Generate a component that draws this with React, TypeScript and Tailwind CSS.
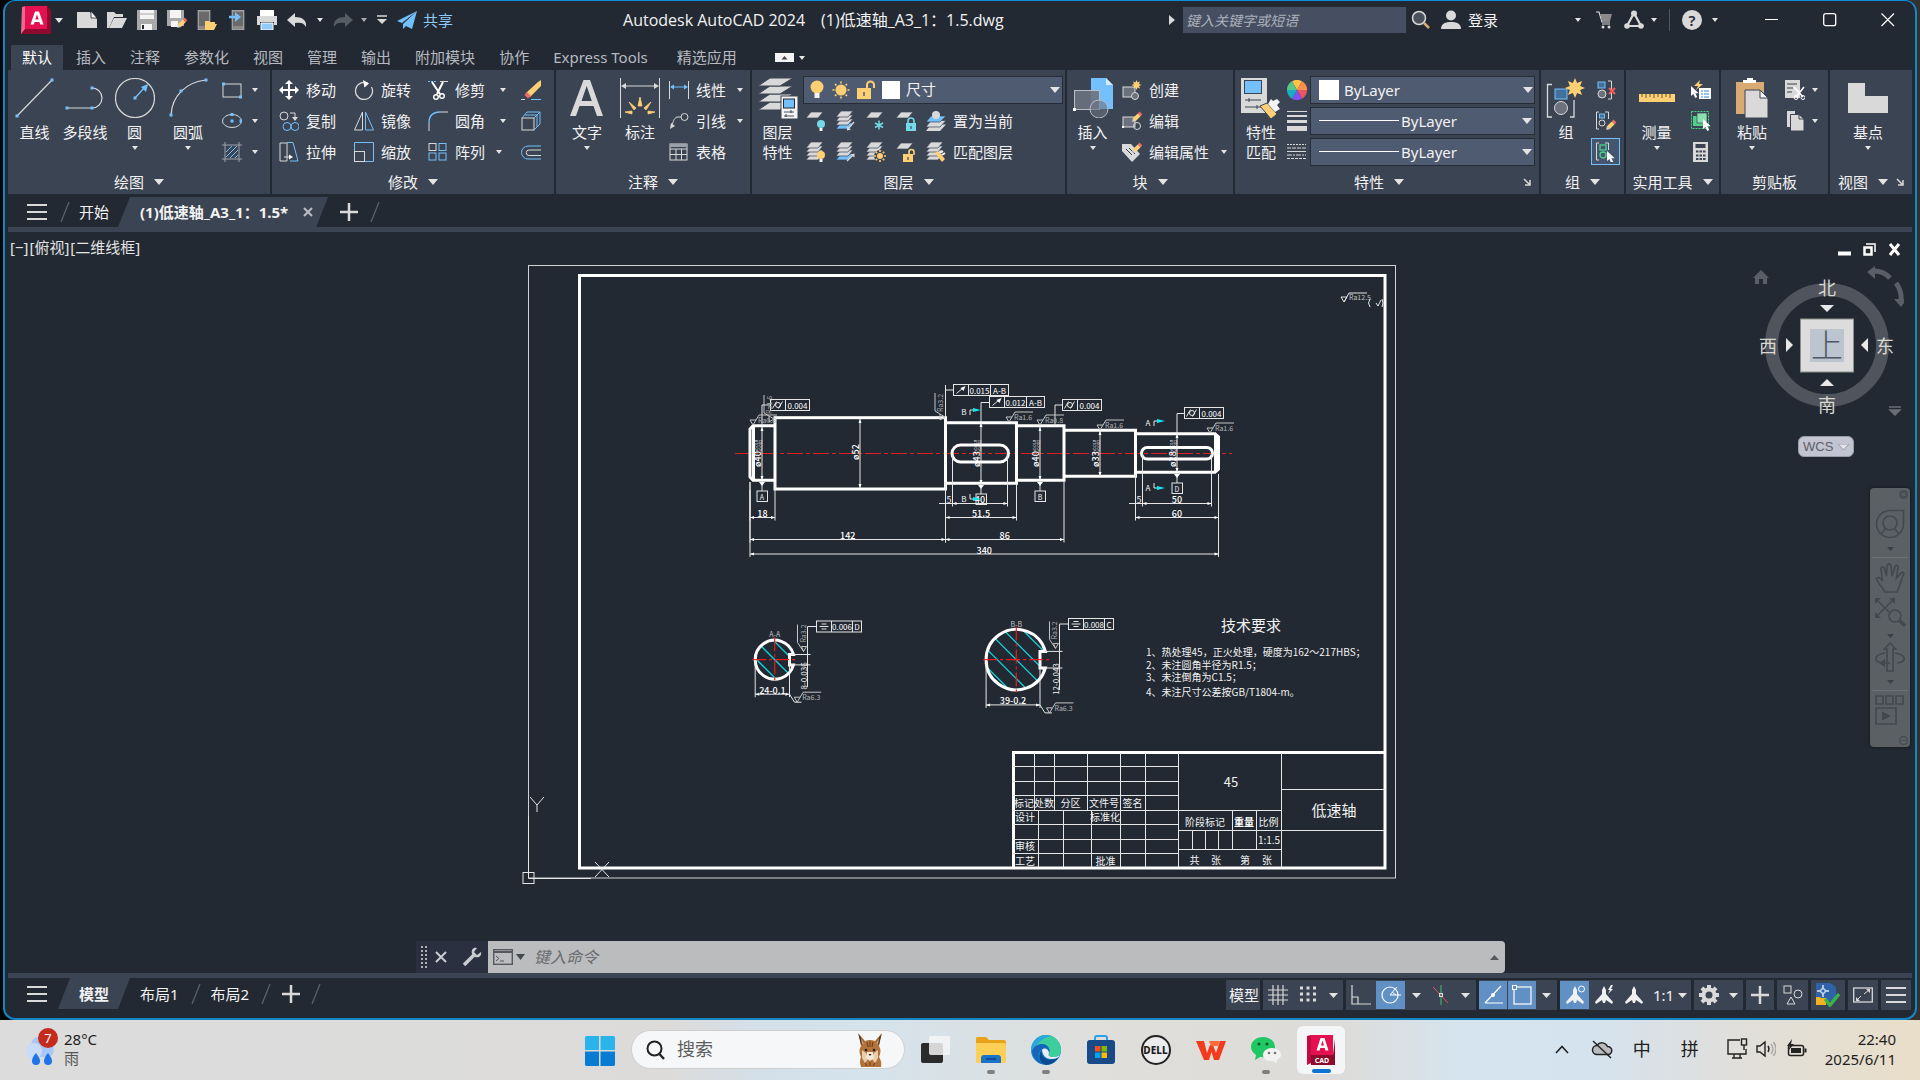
import type { ReactNode } from "react";

const G = "#d9d9d9";
const B = "#74c0fc";
const Y = "#ffd073";
const T = "#74d9e6";

function Svg({ w = 20, h = 20, vb, children, className = "" }: { w?: number; h?: number; vb?: string; children: ReactNode; className?: string }) {
  return (
    <svg width={w} height={h} viewBox={vb ?? `0 0 ${w} ${h}`} fill="none" stroke="none" aria-hidden="true" className={`shrink-0 ${className}`}>
      {children}
    </svg>
  );
}

function Caret({ size = 6, className = "" }: { size?: number; className?: string }) {
  const h = Math.round(size * 0.6);
  return (
    <Svg w={size} h={h} className={className}>
      <path d={`M0 0H${size}L${size / 2} ${h}Z`} fill="#e4e4e4" />
    </Svg>
  );
}

const sq = (x: number, y: number, s = 3) => <rect key={`${x}-${y}`} x={x - s / 2} y={y - s / 2} width={s} height={s} fill={B} />;

/* ---------- ribbon building blocks ---------- */

function Panel({ title, width, children, menu = true, launcher = false }: { title: string; width: string; children: ReactNode; menu?: boolean; launcher?: boolean }) {
  return (
    <section className={`${width} flex flex-col border-r-2 border-[#222933] last:border-r-0`}>
      <div className="flex h-[99px] items-start pt-1">{children}</div>
      <div className="flex h-[25px] items-center">
        <button className="flex flex-1 items-center justify-center gap-[10px] text-[15px] leading-5">
          {title}
          {menu && <Caret size={10} />}
        </button>
        {launcher && (
          <button className="w-[16px]" aria-label={`${title}设置`}>
            <Svg w={8} h={8}>
              <path d="M1 1L6 6M7 2V7H2" stroke={G} strokeWidth="1.5" />
            </Svg>
          </button>
        )}
      </div>
    </section>
  );
}

function Big({ label, width, icon, caret = false }: { label: string[]; width: string; icon: ReactNode; caret?: boolean }) {
  return (
    <button className={`${width} flex flex-none flex-col items-center pt-1 text-[15px] leading-5 whitespace-nowrap`}>
      <span className="flex h-[42px] items-start justify-center pb-[2px]">{icon}</span>
      {label.map((l) => (
        <span key={l} className="mt-[2px] h-[18px] leading-5">{l}</span>
      ))}
      {caret && <Caret className="mt-[6px]" />}
    </button>
  );
}

function Col({ children, className = "" }: { children: ReactNode; className?: string }) {
  return <div className={`flex flex-none flex-col ${className}`}>{children}</div>;
}

function Small({ icon, label, caret = false, gap = "ml-3" }: { icon: ReactNode; label?: string; caret?: boolean; gap?: string }) {
  return (
    <button className="flex h-[31px] items-center text-[15px] leading-5 whitespace-nowrap" aria-label={label ?? "工具"}>
      {icon}
      {label && <span className="ml-[7px]">{label}</span>}
      {caret && <Caret className={gap} />}
    </button>
  );
}

/* ---------- layer glyphs ---------- */

const sheet = (y: number, c = G) => <path key={y} d={`M5 ${y}H17L12 ${y + 6}H0Z`} fill={c} stroke="#3b4453" strokeWidth="0.7" />;
const bulb = (x: number, y: number, c: string) => (
  <>
    <circle cx={x} cy={y} r="4" fill={c} />
    <rect x={x - 1.5} y={y + 4} width="3" height="3" fill="#f4f4f4" />
  </>
);
const sun = (x: number, y: number, r: number) => (
  <>
    <circle cx={x} cy={y} r={r} fill={Y} />
    {[0, 45, 90, 135, 180, 225, 270, 315].map((a) => (
      <path key={a} d={`M${x} ${y - r - 1}V${y - r - 3}`} stroke={Y} strokeWidth="1.6" transform={`rotate(${a} ${x} ${y})`} />
    ))}
  </>
);
const lock = (x: number, y: number, c: string, open: boolean) => (
  <>
    <rect x={x} y={y} width="10" height="8" fill={c} />
    <path d={open ? `M${x + 6} ${y}V${y - 2}a2.5 2.5 0 0 1 5 0V${y + 1}` : `M${x + 2} ${y}V${y - 2}a3 3 0 0 1 6 0V${y}`} stroke={c} strokeWidth="1.6" />
    <path d={`M${x + 5} ${y + 3}v3`} stroke="#3b4453" strokeWidth="1.2" />
  </>
);
const burst = (x: number, y: number, R: number) => {
  const pts = Array.from({ length: 16 }, (_, i) => {
    const r = i % 2 ? R * 0.55 : R;
    const a = (i * Math.PI) / 8;
    return `${(x + r * Math.sin(a)).toFixed(1)},${(y - r * Math.cos(a)).toFixed(1)}`;
  }).join(" ");
  return <polygon points={pts} fill={Y} />;
};
const pencil = (x: number, y: number) => (
  <g transform={`translate(${x} ${y}) rotate(45)`}>
    <rect x="-2" y="0" width="4" height="2.6" fill="#f16a6a" />
    <rect x="-2" y="2.6" width="4" height="7" fill={Y} />
    <path d="M-2 9.600H2L0 12.500Z" fill={G} />
  </g>
);
const cursor = (x: number, y: number) => <path d={`M${x} ${y}v10l2.400-2 1.800 4 2-1-1.800-3.800h3.300Z`} fill="#fff" />;

const LAYER_ROW_2 = [
  <Svg key="a">{sheet(1)}{bulb(15, 13, T)}</Svg>,
  <Svg key="b">{sheet(12, B)}{sheet(8)}{sheet(4)}{sheet(0)}<path d="M18 11L12 18" stroke={G} strokeWidth="1.4" /><path d="M11 19.500v-4l4 3Z" fill={G} /></Svg>,
  <Svg key="c">{sheet(1)}<path d="M13 9.500v9M9 12l8 4.500M17 12l-8 4.500" stroke={T} strokeWidth="1.500" /></Svg>,
  <Svg key="d">{sheet(1)}{lock(10, 12, T, false)}</Svg>,
  <Svg key="e"><path d="M5 13.500H20L14 20H0Z" fill={G} /><path d="M5 9.500H20L14 16H0Z" fill={G} stroke="#3b4453" strokeWidth="0.7" /><path d="M5 5H20L14 11H0Z" fill={B} stroke="#3b4453" strokeWidth="0.7" /><circle cx="10" cy="4" r="4" fill={G} /></Svg>,
];
const LAYER_ROW_3 = [
  <Svg key="a">{sheet(12)}{sheet(8)}{sheet(4)}{sheet(0)}{bulb(15, 13, Y)}</Svg>,
  <Svg key="b">{sheet(12, B)}{sheet(8)}{sheet(4)}{sheet(0)}<path d="M11 19L17 13" stroke={G} strokeWidth="1.400" /><path d="M18.500 11.500v4l-4-3Z" fill={G} /></Svg>,
  <Svg key="c">{sheet(12)}{sheet(8)}{sheet(4)}{sheet(0)}<circle cx="14" cy="14" r="6" fill="#3b4453" />{sun(14, 14, 3)}</Svg>,
  <Svg key="d">{sheet(1)}{lock(7, 12, Y, true)}</Svg>,
  <Svg key="e">{sheet(12)}{sheet(8)}{sheet(4)}{sheet(0)}<path d="M9 11l3-2 7 8-3 3Z" fill={Y} /><path d="M14 11l3-2M16 13l3-2" stroke="#f4f4f4" strokeWidth="2" /></Svg>,
];

function Ribbon() {
  return (
    <div className="mx-[3px] flex bg-[#3b4453] text-[#f2f2f2]">
      <Panel title="绘图" width="w-[264px]">
        <Big width="w-[53px]" label={["直线"]} icon={<Svg w={42} h={40}><path d="M3 38L38 2" stroke={G} strokeWidth="1.200" />{sq(3, 38)}{sq(38, 2)}</Svg>} />
        <Big width="w-[48px]" label={["多段线"]} icon={<Svg w={42} h={40}><path d="M3 30H28a10 10 0 0 0 0-20" stroke={G} strokeWidth="1.200" />{sq(3, 30)}{sq(28, 30)}{sq(28, 10)}</Svg>} />
        <Big width="w-[51px]" caret label={["圆"]} icon={<Svg w={40} h={40}><circle cx="20" cy="20" r="19.500" stroke={G} strokeWidth="1.200" /><path d="M20 20L30 9" stroke={B} strokeWidth="1.300" /><path d="M33 6L26 9L31 14Z" fill={B} />{sq(20, 20)}</Svg>} />
        <Big width="w-[56px]" caret label={["圆弧"]} icon={<Svg w={40} h={40}><path d="M3 37C4 18 18 4 38 2" stroke={G} strokeWidth="1.200" />{sq(3, 37)}{sq(13, 13)}{sq(38, 2)}</Svg>} />
        <Col className="pl-[6px]">
          <Small caret gap="ml-[10px]" icon={<Svg><rect x="1" y="4" width="18" height="13" stroke={G} />{sq(1.500, 4)}{sq(18.500, 17)}</Svg>} />
          <Small caret gap="ml-[10px]" icon={<Svg><ellipse cx="10" cy="10" rx="9.500" ry="6.500" stroke={G} />{sq(10, 3.500)}{sq(19, 10)}{sq(10, 10)}</Svg>} />
          <Small caret gap="ml-[10px]" icon={<Svg><path d="M3 0V20M17 0V20M0 3H20M0 17H20" stroke="#9aa1ac" /><path d="M4 10L10 4M4 15L15 4M8 16L16 8M13 16L16 13" stroke={B} /></Svg>} />
        </Col>
      </Panel>

      <Panel title="修改" width="w-[284px]">
        <Col className="w-[82px] pl-[7px]">
          <Small label="移动" icon={<Svg><path d="M10 2V18M2 10H18" stroke="#fff" strokeWidth="2" /><path d="M10 0l4 4H6ZM10 20l4-4H6ZM0 10l4-4v8ZM20 10l-4-4v8Z" fill="#fff" /></Svg>} />
          <Small label="复制" icon={<Svg><circle cx="5" cy="5" r="4" stroke={G} /><path d="M11 2H16V7" stroke={G} /><path d="M16 10l-3-4h6Z" fill={G} /><circle cx="8" cy="15.500" r="4" stroke={B} /><circle cx="16" cy="15.500" r="4" stroke={B} /></Svg>} />
          <Small label="拉伸" icon={<Svg><path d="M1 1H8V19H1Z" stroke={G} /><path d="M8 0.500H14L19 19H11" stroke={B} /><path d="M5 15H12" stroke={G} /><path d="M14 15l-4-2.500v5Z" fill="#fff" /></Svg>} />
        </Col>
        <Col className="w-[74px]">
          <Small label="旋转" icon={<Svg><path d="M14 3.500A8.500 8.500 0 1 0 17.500 7" stroke={G} strokeWidth="1.300" /><path d="M9 0l6 3.500-4.500 4Z" fill="#fff" /></Svg>} />
          <Small label="镜像" icon={<Svg><path d="M8.500 1V19H0.500Z" stroke={G} /><path d="M11.500 1V19H19.500Z" stroke={B} /></Svg>} />
          <Small label="缩放" icon={<Svg><path d="M0.500 9V0.500H19.500V19.500H11" stroke={B} /><rect x="0.500" y="9.500" width="10" height="10" stroke={G} /></Svg>} />
        </Col>
        <Col className="w-[93px]">
          <Small label="修剪" caret gap="ml-[15px]" icon={<Svg><path d="M0 1.500H8" stroke={B} strokeDasharray="2 1" /><path d="M12 1.500H20" stroke={G} /><path d="M4 2L12 14M15 2L9 14" stroke="#fff" strokeWidth="2" /><circle cx="8" cy="17" r="2.300" stroke="#fff" strokeWidth="1.400" /><circle cx="14" cy="16" r="2.300" stroke="#fff" strokeWidth="1.400" /></Svg>} />
          <Small label="圆角" caret gap="ml-[15px]" icon={<Svg><path d="M1 12C1 5 5 1 12 1" stroke={B} strokeWidth="1.300" /><path d="M1 12V20M12 1H20" stroke={G} /></Svg>} />
          <Small label="阵列" caret gap="ml-[11px]" icon={<Svg><rect x="1" y="1.500" width="7" height="7" stroke={G} /><rect x="11" y="1.500" width="7" height="7" stroke={B} /><rect x="1" y="11" width="7" height="7" stroke={B} /><rect x="11" y="11" width="7" height="7" stroke={B} /></Svg>} />
        </Col>
        <Col>
          <Small icon={<Svg><path d="M17 2L20 0V6L9 17L5 13Z" fill={Y} /><path d="M6 12L10 16L7 18.500L3.500 15Z" fill="#f16a6a" /><path d="M0 19.500H4" stroke={G} /><path d="M10 19.500H20" stroke={B} /></Svg>} />
          <Small icon={<Svg><rect x="1" y="7" width="12" height="12" stroke={G} /><path d="M1 7L6 1H19V13L13 19M13 7L19 1M4 4H16V16" stroke={B} /></Svg>} />
          <Small icon={<Svg><path d="M20 4H7a6.500 6.500 0 0 0 0 13H20" stroke={B} /><path d="M20 8H8a2.700 2.700 0 0 0 0 5.500H20" stroke={G} /></Svg>} />
        </Col>
      </Panel>

      <Panel title="注释" width="w-[196px]">
        <Big width="w-[62px]" caret label={["文字"]} icon={<Svg w={34} h={40}><path d="M0 38L13.500 2H20L33 38H27L23.500 28H9.500L6 38ZM11.500 23H21.800L16.700 8Z" fill={G} /></Svg>} />
        <Big width="w-[44px]" label={["标注"]} icon={<Svg w={40} h={40}><path d="M0.500 0V40M39.500 0V40M3 8H37" stroke={G} /><path d="M1 8l5-3v6ZM39 8l-5-3v6Z" fill={G} /><path d="M5 34l7 2v-3ZM9 24l7 6-2 2ZM20 19l2 9h-4ZM31 24l-7 6 2 2ZM35 34l-7 2v-3Z" stroke={Y} fill={Y} strokeWidth="0.800" /></Svg>} />
        <Col className="pl-[7px]">
          <Small label="线性" caret gap="ml-[11px]" icon={<Svg><path d="M0.500 1V19M19.500 1V19" stroke={G} /><path d="M2 7H18" stroke={B} /><path d="M1 7l4-2.500v5ZM19 7l-4-2.500v5Z" fill={B} /></Svg>} />
          <Small label="引线" caret gap="ml-[11px]" icon={<Svg><circle cx="15.500" cy="6" r="3.500" stroke={G} /><path d="M12 6H8C5 7 4 11 3 15" stroke={G} /><path d="M1 18l1-6 4 3Z" fill={G} /></Svg>} />
          <Small label="表格" icon={<Svg><rect x="1" y="2" width="17" height="16" stroke={G} /><path d="M1 7H18M1 12.500H18M7 7V18M12.500 7V18" stroke={G} /><path d="M1 3.500H18" stroke="#9aa1ac" strokeWidth="3" /></Svg>} />
        </Col>
      </Panel>

      <Panel title="图层" width="w-[315px]">
        <Big width="w-[51px]" label={["图层", "特性"]} icon={
          <Svg w={40} h={42}>
            {[24, 16, 8, 0].map((y) => <path key={y} d={`M12 ${y}H35L22 ${y + 8}H0Z`} fill={G} stroke="#3b4453" strokeWidth="1" />)}
            <rect x="23" y="18" width="17" height="23" fill="#f4f4f4" stroke="#3b4453" />
            <rect x="25.500" y="21" width="11" height="9" fill={B} stroke="#222933" />
            <path d="M26 34H36M26 38H36M33 32v3M28 36v3" stroke="#222933" strokeWidth="0.800" />
          </Svg>} />
        <Col className="w-[260px]">
          <div className="flex h-[31px] items-center">
            <button className="flex h-7 flex-1 items-center border border-[#262d38] bg-[#4f5b70] pr-[2px] pl-[6px] text-[15px]">
              <Svg w={14} h={20}><circle cx="7" cy="7" r="6.500" fill={Y} /><rect x="4.500" y="13" width="5" height="5" fill="#f4f4f4" /></Svg>
              <Svg className="ml-[7px]">{sun(10, 10, 5.500)}</Svg>
              <Svg className="ml-[6px]" w={18}><rect x="0" y="8" width="14" height="11" fill={Y} /><path d="M10 8V5a3.500 3.500 0 0 1 7 0V8" stroke={Y} strokeWidth="2" /><path d="M7 12v4" stroke="#4f5b70" strokeWidth="1.500" /></Svg>
              <span className="ml-[7px] h-[18px] w-[18px] bg-white" />
              <span className="ml-[6px] flex-1 text-left">尺寸</span>
              <Caret size={10} />
            </button>
          </div>
          <div className="flex h-[31px] items-center gap-[10px] pl-[3px]">
            {LAYER_ROW_2}
            <button className="-ml-[3px] text-[15px] leading-5">置为当前</button>
          </div>
          <div className="flex h-[31px] items-center gap-[10px] pl-[3px]">
            {LAYER_ROW_3}
            <button className="-ml-[3px] text-[15px] leading-5">匹配图层</button>
          </div>
        </Col>
      </Panel>

      <Panel title="块" width="w-[168px]">
        <Big width="w-[51px]" caret label={["插入"]} icon={
          <Svg w={40} h={40}>
            <path d="M18 0H33L40 7V31H18Z" fill={B} /><path d="M33 0V7H40Z" fill="#d6ebfb" />
            <rect x="1.500" y="12.500" width="25" height="19" fill="#6b727e" fillOpacity="0.900" stroke="#b9bdc4" />
            <circle cx="26" cy="31" r="9" fill="#6b727e" fillOpacity="0.600" stroke="#b9bdc4" /><rect x="0" y="30" width="3" height="3" fill="#fff" />
          </Svg>} />
        <Col className="pl-1">
          <Small label="创建" icon={<Svg><rect x="1" y="7" width="12" height="10" fill="#6b727e" stroke={G} /><circle cx="13" cy="16" r="3.500" fill="#6b727e" stroke={G} />{burst(14.500, 5, 5)}</Svg>} />
          <Small label="编辑" icon={<Svg><rect x="1" y="6" width="12" height="10" fill="#6b727e" stroke={G} /><circle cx="15" cy="15" r="3.500" stroke={G} />{pencil(19, 2)}<rect x="0" y="15" width="2" height="2" fill="#fff" /></Svg>} />
          <Small label="编辑属性" caret icon={<Svg><path d="M0 2H9L18 12L10 20L0 9Z" fill={G} /><path d="M4 7l6 6M7 6l6 6" stroke="#3b4453" />{pencil(19, 2)}</Svg>} />
        </Col>
      </Panel>

      <Panel title="特性" width="w-[306px]" launcher>
        <Big width="w-[52px]" label={["特性", "匹配"]} icon={
          <Svg w={40} h={42}>
            <rect x="0" y="0" width="26" height="35" fill={G} /><rect x="3.500" y="2.500" width="17" height="13" fill={B} stroke="#3b4453" />
            <path d="M4 22H20M4 29H20M8 20v4M16 27v4" stroke="#3b4453" /><path d="M19 28L26 25L36 36L30 41Z" fill={Y} stroke="#3b4453" /><path d="M27 26l7 8 5-3-3-4 3-3-3-3-4 2-2-2Z" fill="#f4f4f4" />
          </Svg>} />
        <Col className="mr-[3px]">
          <Small icon={<Svg>{["#ffc247", "#ff8f4a", "#e85564", "#8250f0", "#18aec0", "#58c58a"].map((c, i) => <path key={c} d="M10 10L5 1.300A10 10 0 0 1 15 1.300Z" fill={c} transform={`rotate(${i * 60} 10 10)`} />)}</Svg>} />
          <Small icon={<Svg><path d="M0 0.500H20" stroke={G} /><path d="M0 5H20" stroke={G} strokeWidth="2" /><path d="M0 10.500H20" stroke={G} strokeWidth="3" /><path d="M0 17.500H20" stroke={G} strokeWidth="5" /></Svg>} />
          <Small icon={<Svg><path d="M0 2.500H19" stroke={G} strokeDasharray="2 1" /><path d="M0 6H19" stroke={G} strokeDasharray="4 1" /><path d="M0 9.500H19" stroke={G} /><path d="M0 13H19" stroke={G} strokeDasharray="5 1 2 1" /><path d="M0 16.500H19" stroke={G} strokeDasharray="3 1" /></Svg>} />
        </Col>
        <Col className="w-[225px]">
          <div className="flex h-[31px] items-center">
            <button className="flex h-7 flex-1 items-center border border-[#262d38] bg-[#4f5b70] pr-px pl-2 text-[15px]">
              <span className="h-5 w-5 bg-white" /><span className="ml-[5px] flex-1 pt-px text-left">ByLayer</span><Caret size={10} />
            </button>
          </div>
          {["lineweight", "linetype"].map((k) => (
            <div key={k} className="flex h-[31px] items-center">
              <button className="flex h-7 flex-1 items-center border border-[#262d38] bg-[#4f5b70] pr-[2px] pl-2 text-[15px]">
                <span className="h-px w-20 bg-white" /><span className="ml-[2px] flex-1 pt-px text-left">ByLayer</span><Caret size={10} />
              </button>
            </div>
          ))}
        </Col>
      </Panel>

      <Panel title="组" width="w-[85px]">
        <Big width="w-[50px]" label={["组"]} icon={
          <Svg w={40} h={42}>
            <path d="M6 6.500H1.500V39H6M24 39H28V22" stroke={G} strokeWidth="1.300" /><rect x="9" y="11" width="12" height="10" fill="#42729c" stroke={B} />
            <circle cx="15" cy="30" r="6.500" fill="#6b727e" stroke={G} />{burst(29, 10, 10)}
          </Svg>} />
        <Col>
          <Small icon={<span className="flex w-[30px] justify-center"><Svg><rect x="2" y="2" width="7" height="6" fill="#42729c" stroke={B} /><circle cx="6" cy="14" r="4" fill="#6b727e" stroke={G} /><path d="M12 1H15.500V19H12" stroke={G} /><path d="M13 8l6 6M19 8l-6 6" stroke="#f25c5c" strokeWidth="2" /></Svg></span>} />
          <Small icon={<span className="flex w-[30px] justify-center"><Svg><path d="M3 1H0.500V18H3M9 1H12.500V8" stroke={G} /><rect x="3.500" y="3" width="5" height="4" fill="#42729c" stroke={B} /><circle cx="6" cy="12" r="3" stroke={G} />{pencil(19, 10)}</Svg></span>} />
          <Small icon={<span className="flex h-[27px] w-[29px] items-center justify-center border border-[#74c0fc] bg-[#43566e]"><Svg><path d="M3 1H0.500V18H3M9 1H12.500V8" stroke={G} /><rect x="4" y="3" width="6" height="5" stroke="#4fd08a" strokeWidth="1.300" /><circle cx="7" cy="13" r="3" stroke="#4fd08a" strokeWidth="1.300" />{cursor(11, 9)}</Svg></span>} />
        </Col>
      </Panel>

      <Panel title="实用工具" width="w-[95px]">
        <Big width="w-[61px]" caret label={["测量"]} icon={<Svg w={36} h={40}><rect x="0" y="16" width="36" height="8" fill={Y} /><path d="M3 16v3M7 16v4M11 16v3M15 16v4M19 16v3M23 16v4M27 16v3M31 16v4" stroke="#6b5a34" /></Svg>} />
        <Col className="pl-1">
          <Small icon={<Svg><path d="M9 0L3 6H7L5 10L12 4H8Z" fill={Y} />{cursor(0, 6)}<rect x="8" y="8" width="12" height="11" fill="#fff" /><path d="M10 11h2M10 14h2M10 17h2M13 11h5M13 14h5M13 17h5" stroke="#2f86d6" /></Svg>} />
          <Small icon={<Svg><rect x="0.500" y="0.500" width="17" height="17" stroke="#4fd08a" strokeDasharray="2 1" /><rect x="2" y="5" width="11" height="10" fill="#4fd08a" /><rect x="6" y="2" width="10" height="10" fill="#8ce0b0" stroke="#3b4453" strokeWidth="0.700" />{cursor(12, 8)}</Svg>} />
          <Small icon={<Svg><rect x="2" y="0" width="15" height="20" fill={G} /><rect x="4.500" y="2" width="10" height="4" fill="#3b4453" /><path d="M5 9.500H14.500M5 13.500H14.500M5 17H14.500" stroke="#3b4453" strokeWidth="2" strokeDasharray="2.500 1" /></Svg>} />
        </Col>
      </Panel>

      <Panel title="剪贴板" width="w-[109px]" menu={false}>
        <Big width="w-[62px]" caret label={["粘贴"]} icon={
          <Svg w={32} h={41}><path d="M0 4H28V36H0Z" fill="#d9ab72" /><path d="M7 5V2H11V0H17V2H20V5Z" fill="#fff" /><path d="M9 12H24L32 20V40H9Z" fill={G} stroke="#3b4453" /><path d="M24 12V20H32Z" fill="#f4f4f4" stroke="#3b4453" /></Svg>} />
        <Col className="pl-[2px]">
          <Small caret gap="ml-[7px]" icon={<Svg><rect x="0" y="0" width="15" height="18" fill={G} /><path d="M2 4H12M2 8H8M2 12H7" stroke="#3b4453" /><path d="M9 7L18 17M19 7L11 17" stroke="#fff" strokeWidth="1.600" /><circle cx="11" cy="17.500" r="2" stroke="#fff" /><circle cx="18" cy="17.500" r="2" stroke="#fff" /></Svg>} />
          <Small caret gap="ml-[7px]" icon={<Svg><path d="M2 0H10V16H2Z" fill={G} /><path d="M5.500 3.500H14L19 8V20H5.500Z" fill={G} stroke="#3b4453" /><path d="M14 3.500V8H19" stroke="#3b4453" /></Svg>} />
        </Col>
      </Panel>

      <Panel title="视图" width="flex-1" launcher>
        <Big width="w-[76px]" caret label={["基点"]} icon={<Svg w={40} h={40}><path d="M0 5H17V18H40V35H0Z" fill={G} /></Svg>} />
      </Panel>
    </div>
  );
}

/* ---------- title bar ---------- */

const page = "M0 2H13L20 9V18H0Z";

function TitleBar() {
  return (
    <header className="flex h-[38px] items-center pr-5 pl-4 text-[15px] text-[#f2f2f2]">
      <button className="flex items-center" aria-label="AutoCAD">
        <Svg w={30} h={28}>
          <path d="M1 1L5 0V26L0 28Z" fill="#f2668f" /><path d="M4 0H26V23H4Z" fill="#e51050" /><path d="M26 0L30 4V28H0L4 23H26Z" fill="#8b0a2d" />
          <path d="M14 5.500H18L22.500 18.500H19.200L18.400 16H13.600L12.800 18.500H9.500ZM14.400 13.400H17.600L16 8.300Z" fill="#fff" />
        </Svg>
        <Caret size={8} className="ml-1" />
      </button>
      <nav className="ml-[14px] flex items-center gap-[10px]">
        <Svg><path d={page} fill={G} /><path d="M14 1V8H20Z" fill="#f4f4f4" stroke="#222933" strokeWidth="0.800" /></Svg>
        <Svg><path d="M0 2H7L9 4H16V7H7L2 18H0Z" fill={G} /><path d="M7 8H20L15 18H2Z" fill={G} /></Svg>
        <Svg><path d="M0 0H20V20H0Z" fill="#a9a9a9" /><path d="M3 0H17V9H3Z" fill="#f4f4f4" /><path d="M3 4H17" stroke="#a9a9a9" /><path d="M4 14H15V20H4Z" fill="#f4f4f4" /><path d="M6 15V19" stroke="#222933" strokeWidth="2" /></Svg>
        <Svg><path d="M0 0H17V16H0Z" fill="#a9a9a9" /><path d="M3 0H14V8H3Z" fill="#f4f4f4" /><path d="M4 11H11V17H4Z" fill="#f4f4f4" />{pencil(19, 9)}</Svg>
        <Svg><path d="M1 0H13V20H1Z" fill="#8a8a8a" stroke={G} strokeWidth="0.500" /><path d="M2 2H12V16H2Z" fill="#6a6a6a" /><path d="M8 11H12L13 12H18V14L20 14L17 20H8Z" fill={Y} /></Svg>
        <Svg><path d="M5 0H17V20H5Z" fill="#8a8a8a" stroke={G} strokeWidth="0.500" /><path d="M6 2H16V16H6Z" fill="#6a6a6a" /><path d="M2 7H9" stroke={B} strokeWidth="2.500" /><path d="M14 7L8 2V12Z" fill={B} /></Svg>
        <Svg><path d="M3 0H17V6H3Z" fill="#fff" /><path d="M0 6H20V15H17V12H3V15H0Z" fill={G} /><path d="M4 13H16V20H4Z" fill="#90cbfa" stroke="#fff" /></Svg>
        <Svg><path d="M8 3L0 10L8 17V13C14 12 17 13 19 17C20 10 15 7 8 7Z" fill={G} /></Svg>
        <Caret />
        <Svg className="opacity-50"><path d="M12 3L20 10L12 17V13C6 12 3 13 1 17C0 10 5 7 12 7Z" fill="#8a8f96" /></Svg>
        <Caret className="-ml-[2px] opacity-70" />
        <Svg w={10} h={10}><path d="M0 1H10" stroke={G} strokeWidth="1.500" /><path d="M0 4H10L5 9Z" fill={G} /></Svg>
        <Svg><path d="M20 1L0 11L5 13ZM20 1L6 14V19L9 16L15 19Z" fill={B} /></Svg>
      </nav>
      <button className="ml-[6px] leading-5 text-[#8ccbfa]">共享</button>
      <h1 className="ml-[170px] font-['Open_Sans','Noto_Sans_CJK_SC',sans-serif] text-base leading-5 whitespace-nowrap">Autodesk AutoCAD 2024</h1>
      <span className="ml-4 font-['Open_Sans','Noto_Sans_CJK_SC',sans-serif] text-base leading-5 whitespace-nowrap">(1)低速轴_A3_1：1.5.dwg</span>
      <div className="ml-auto flex items-center">
        <Svg w={6} h={10} className="mr-2"><path d="M0 0L6 5L0 10Z" fill={G} /></Svg>
        <input aria-label="搜索" placeholder="键入关键字或短语" className="h-[26px] w-[223px] bg-[#464f61] px-[3px] text-[14px] italic placeholder:text-[#aab0ba]" />
        <Svg className="ml-[5px]"><circle cx="8" cy="8" r="6.500" fill="#4a525e" stroke={G} strokeWidth="1.500" /><path d="M13 13L18 18" stroke="#d9ab72" strokeWidth="2.500" /></Svg>
        <button className="ml-[10px] flex items-center gap-[7px] leading-5"><Svg><circle cx="10" cy="5.500" r="5" fill={G} /><path d="M0 19C0 13 5 12 10 12S20 13 20 19Z" fill={G} /></Svg>登录</button>
        <Caret className="ml-[77px]" />
        <Svg w={16} h={18} className="ml-[15px]"><path d="M0 1H3L6 11H14" stroke={G} strokeWidth="1.200" /><path d="M4 3H16L14 10H6Z" fill="#8a8a8a" /><path d="M6 13H14" stroke={G} /><circle cx="7" cy="16" r="1.500" fill={G} /><circle cx="13" cy="16" r="1.500" fill={G} /></Svg>
        <Svg className="ml-3"><path d="M10 3L3 16H17Z" stroke={G} strokeWidth="2.200" /><circle cx="10" cy="3.500" r="3" fill={G} /><circle cx="3" cy="16" r="2.800" fill={G} /><circle cx="17" cy="16" r="2.800" fill={G} /></Svg>
        <Caret className="ml-[7px]" />
        <span className="mx-3 h-[22px] w-px bg-[#4f5663]" />
        <button className="h-5 w-5 rounded-full bg-[#d9d9d9] text-[15px] leading-5 font-semibold text-[#222933]" aria-label="帮助">?</button>
        <Caret className="ml-[10px]" />
        <button className="ml-[47px]" aria-label="最小化"><Svg w={14} h={14}><path d="M0 6.500H13" stroke="#fff" /></Svg></button>
        <button className="ml-11" aria-label="最大化"><Svg w={14} h={14}><rect x="0.700" y="0.700" width="12" height="12" rx="2" stroke="#fff" strokeWidth="1.300" /></Svg></button>
        <button className="ml-11" aria-label="关闭"><Svg w={14} h={14}><path d="M0.500 0.500L13 13M13 0.500L0.500 13" stroke="#fff" strokeWidth="1.200" /></Svg></button>
      </div>
    </header>
  );
}

const RIBBON_TABS = ["插入", "注释", "参数化", "视图", "管理", "输出", "附加模块", "协作", "Express Tools", "精选应用"];

function RibbonTabs() {
  return (
    <nav className="flex h-[25px] items-center gap-[2px] pl-[6px] text-[15px] leading-5 text-[#b7bac0]">
      <button className="h-full bg-[#3b4453] px-[11px] pb-px text-white">默认</button>
      {RIBBON_TABS.map((t) => (
        <button key={t} className="px-[11px] pb-px whitespace-nowrap last-of-type:pl-4 [&:nth-child(11)]:pl-4">{t}</button>
      ))}
      <button className="ml-[25px] flex items-center gap-[5px]" aria-label="最小化功能区">
        <Svg w={19} h={9}><rect width="19" height="9" fill="#f4f4f4" /><path d="M6.500 6.500H12.500L9.500 3Z" fill="#444" /></Svg>
        <Caret />
      </button>
    </nav>
  );
}

function Slash() {
  return <Svg w={10} h={20}><path d="M9 0L1 20" stroke="#59616e" strokeWidth="1.300" /></Svg>;
}
function Menu() {
  return <Svg w={20} h={16}><path d="M0 1H20M0 8H20M0 15H20" stroke={G} strokeWidth="2" /></Svg>;
}
function Plus() {
  return <Svg w={18} h={18}><path d="M9 0V18M0 9H18" stroke={G} strokeWidth="2.500" /></Svg>;
}

function FileTabs() {
  return (
    <nav className="mx-[3px] flex h-[35px] items-start border-b-[5px] border-[#3b4453] pl-[19px] text-[15px] leading-5 text-[#f2f2f2]">
      <button className="flex h-[30px] items-center" aria-label="菜单"><Menu /></button>
      <span className="ml-[13px] flex h-[30px] items-center"><Slash /></span>
      <button className="ml-[9px] h-[30px]">开始</button>
      <div className="ml-[9px] flex h-[30px] items-center gap-[15px] bg-[#3b4453] pr-[15px] pl-[22px] font-bold [clip-path:polygon(12px_0,100%_0,calc(100%_-_12px)_100%,0_100%)]">
        <span className="whitespace-nowrap">(1)低速轴_A3_1：1.5*</span>
        <button aria-label="关闭选项卡"><Svg w={10} h={10}><path d="M1 1L9 9M9 1L1 9" stroke="#b7bac0" strokeWidth="2.200" /></Svg></button>
      </div>
      <button className="ml-3 flex h-[30px] items-center" aria-label="新建"><Plus /></button>
      <span className="ml-3 flex h-[30px] items-center"><Slash /></span>
    </nav>
  );
}

/* ---------- CAD drawing ---------- */

const thin = { stroke: "#e6e6e6", strokeWidth: 1 };
const thick = { stroke: "#fff", strokeWidth: 3 };

function L({ d, s = thin }: { d: string; s?: { stroke: string; strokeWidth: number } }) {
  return <path d={d} {...s} />;
}
function Tx({ x, y, s = 9, children, rot = 0, anchor = "middle", fill = "#f2f2f2" }: { x: number; y: number; s?: number; children: ReactNode; rot?: number; anchor?: "middle" | "start"; fill?: string }) {
  return (
    <text x={x} y={y} fontSize={s} fill={fill} textAnchor={anchor} dominantBaseline="central" transform={rot ? `rotate(${rot} ${x} ${y})` : undefined}>
      {children}
    </text>
  );
}
function Dim({ x1, x2, y, label, from, tx }: { x1: number; x2: number; y: number; label: string; from: number; tx?: number }) {
  return (
    <g>
      <L d={`M${x1} ${y}H${x2}M${x1} ${from}V${y + 3}M${x2} ${from}V${y + 3}`} />
      <path d={`M${x1} ${y}l4-1.500v3ZM${x2} ${y}l-4-1.500v3Z`} fill="#fff" />
      <text x={tx ?? (x1 + x2) / 2} y={y - 4} fontSize="9" fontWeight="500" fill="#fff" textAnchor="middle" dominantBaseline="central">{label}</text>
    </g>
  );
}
function Frame({ x, y, cells, sym }: { x: number; y: number; cells: [number, string][]; sym: "cyl" | "run" | "symm" }) {
  const total = 15 + cells.reduce((a, c) => a + c[0], 0);
  let cx = x + 15;
  return (
    <g>
      <rect x={x} y={y} width={total} height="11" {...thin} />
      {sym === "cyl" && <><circle cx={x + 7.500} cy={y + 5.500} r="2.500" {...thin} /><L d={`M${x + 2} ${y + 9}l4-7M${x + 8} ${y + 9}l4-7`} /></>}
      {sym === "run" && <><L d={`M${x + 3} ${y + 9}l7-6`} /><path d={`M${x + 12} ${y + 1.500}l-5 2 3 3Z`} fill="#fff" /></>}
      {sym === "symm" && <L d={`M${x + 3} ${y + 5.500}h9M${x + 5} ${y + 3}h5M${x + 5} ${y + 8}h5`} />}
      {cells.map(([w, t]) => {
        const at = cx;
        cx += w;
        return (
          <g key={t}>
            <L d={`M${at} ${y}v11`} />
            <Tx x={at + w / 2} y={y + 5.500} s={8} fill="#fff">{t}</Tx>
          </g>
        );
      })}
    </g>
  );
}
function Datum({ x, y, top, label }: { x: number; y: number; top: number; label?: string }) {
  return (
    <g>
      <rect x={x - 5} y={y} width="10.500" height="10.500" {...thin} />
      <L d={`M${x} ${top}V${y}`} />
      <path d={`M${x - 3} ${top}h6l-3 4Z`} fill="#fff" />
      {label && <Tx x={x} y={y + 5.500} s={7}>{label}</Tx>}
    </g>
  );
}
function Finish({ x, y, label, rot = 0 }: { x: number; y: number; label: string; rot?: number }) {
  return (
    <g transform={`translate(${x} ${y}) rotate(${rot})`}>
      <path d="M0 0L-3 -5H3ZM3 -5L6 -10H24" stroke="#c4c4c4" />
      <text x="5" y="-2" fontSize="7" fill="#b4b4b4">{label}</text>
    </g>
  );
}
function Dia({ x, label, top, bottom, tol = true }: { x: number; label: string; top: number; bottom: number; tol?: boolean }) {
  return (
    <g>
      <L d={`M${x} ${top}V${bottom}`} />
      <path d={`M${x} ${top}l-1.500 4h3ZM${x} ${bottom}l-1.500-4h3Z`} fill="#fff" />
      <g transform={`translate(${x - 4} ${tol ? 467 : 460}) rotate(-90)`} fill="#fff">
        <text x="0" y="3" fontSize="9" fontWeight="500">{label}</text>
        {tol && <><text x="15" y="0" fontSize="4">+0.018</text><text x="15" y="4" fontSize="4">+0.002</text></>}
      </g>
    </g>
  );
}

function Section({ cx, r, name, notch, half, width, depth, frameX, frameY, datum, tol, hatch }: { cx: number; r: number; name: string; notch: number; half: number; width: string; depth: string; frameX: number; frameY: number; datum: string; tol: string; hatch: number[] }) {
  const cy = 659.700;
  const ex = Math.sqrt(r * r - half * half);
  const right = frameX - 9;
  const dimY = cy + r + 15;
  return (
    <g>
      <clipPath id={`clip-${datum}`}><circle cx={cx} cy={cy} r={r} /></clipPath>
      <g clipPath={`url(#clip-${datum})`}>
        <path d={hatch.map((o) => `M${cx - 40 + o} ${cy - 40}l80 80`).join("")} stroke="#12d4dc" strokeWidth="1.300" />
      </g>
      <path d={`M${notch} ${cy - half}H${cx + r + 2}V${cy + half}H${notch}Z`} fill="#212830" />
      <path d={`M${cx + ex} ${cy + half}A${r} ${r} 0 1 1 ${cx + ex} ${cy - half}H${notch}V${cy + half}Z`} {...thick} />
      <path d={`M${notch + 2} ${cy - half + 2}H${cx + r + 2}V${cy + half - 2}H${notch + 2}Z`} fill="#212830" />
      <path d={`M${cx - r - 3} ${cy}H${cx + r + 4}M${cx} ${cy - r - 3}V${cy + r + 3}`} stroke="#f01818" strokeWidth="1.200" strokeDasharray="14 3 3 3" />
      <L d={`M${cx + r - 3} ${cy - half}H${right + 3}M${cx + r - 3} ${cy + half}H${right + 3}M${right} ${cy + half + 22}V${frameY + 5.500}H${frameX}`} />
      <Frame x={frameX} y={frameY} sym="symm" cells={[[21, tol], [9, datum]]} />
      <Dim x1={cx - r} x2={notch} y={dimY} from={cy} label={depth} />
      <Finish x={cx + r + 3} y={dimY + 8} label="Ra6.3" />
      <L d={`M${notch} ${dimY}l5 8h7`} />
      <Tx x={right - 4} y={cy + half + 11} s={8} rot={-90}>{width}</Tx>
      <g transform={`translate(${right - 1} ${cy - half - 3})`}><path d="M0 -5L-3 0L-5 -5ZM-3 0L-9 -9V-27" stroke="#c4c4c4" /></g>
      <Tx x={right - 5} y={cy - half - 21} s={7} rot={-90} fill="#b4b4b4">Ra3.2</Tx>
      <Tx x={cx} y={cy - r - 6} s={7} fill="#c4c4c4">{name}</Tx>
    </g>
  );
}

function TitleBlock() {
  return (
    <g>
      <L s={thick} d="M1385 752.500H1013.500V868" />
      <L d="M1013 766.500H1179M1013 781.500H1179M1013 795.500H1179M1013 810.500H1282M1013 824.500H1179M1013 839.500H1179M1013 853.500H1179" />
      <L d="M1034.500 753V810M1054.500 753V810M1087.500 753V810M1038.500 810V867M1063.500 810V867M1091.500 810V867M1120.500 753V867M1145.500 753V867M1178.500 753V867M1281.500 753V867" />
      <L d="M1179 830.500H1385M1179 849.500H1282M1282 789.500H1385M1192.500 830V849M1205.500 830V849M1218.500 830V849M1232.500 810V849M1256.500 810V849" />
      {([
        [1024, 802, "标记"], [1044, 802, "处数"], [1070.500, 802, "分区"], [1104, 802, "文件号"], [1132.500, 802, "签名"],
        [1025, 816, "设计"], [1105, 816, "标准化"], [1025, 845, "审核"], [1025, 860.500, "工艺"], [1105.500, 860.500, "批准"],
        [1205, 821, "阶段标记"], [1268.500, 821, "比例"], [1194.500, 859, "共"], [1216, 859, "张"], [1245, 859, "第"], [1267, 859, "张"],
      ] as [number, number, string][]).map(([x, y, t]) => <Tx key={`${x}${y}`} x={x} y={y} s={10}>{t}</Tx>)}
      <text x="1244" y="821" fontSize="10" fontWeight="bold" fill="#fff" textAnchor="middle" dominantBaseline="central">重量</text>
      <Tx x={1269} y={839.500} s={10}>1:1.5</Tx>
      <Tx x={1231} y={781.500} s={13}>45</Tx>
      <Tx x={1334} y={809.500} s={15}>低速轴</Tx>
    </g>
  );
}

function Drawing() {
  return (
    <svg width="880" height="628" viewBox="520 260 880 628" fill="none" className="font-['Noto_Sans_CJK_SC',sans-serif]" role="img" aria-label="低速轴零件图">
      <rect x="528.500" y="265.500" width="867" height="612.500" stroke="#d0d3d6" />
      <rect x="579.500" y="275.500" width="805.500" height="592.500" {...thick} />
      <TitleBlock />

      {/* coordinate system marker */}
      <g stroke="#e6e6e6">
        <rect x="523" y="872.500" width="11" height="11" /><path d="M528.500 878V816M528.500 878.500H591M530 797L537 805V812M544 797L537 805M595 862L609 877M609 862L595 877" />
      </g>

      {/* shaft */}
      <path d="M735 453.500H1232" stroke="#e02020" strokeDasharray="16 3 4 3" />
      <g {...thick}>
        <path d="M775 425.700H753L750 429V477L753 480.300H775" /><path d="M753.500 426V480" />
        <rect x="775" y="417.700" width="170.500" height="71.300" />
        <path d="M945.500 422.700H1016.500V483.300H945.500M1016.500 425.700H1064V480.300H1016.500M1064 430.300H1135.500V476.300H1064" />
        <path d="M1135.500 433.700H1215L1218.500 437V469L1215 472.300H1135.500ZM1215.500 434V472" />
        <rect x="952" y="445" width="56.500" height="17" rx="8.500" /><rect x="1141.500" y="447.500" width="71" height="11.500" rx="5.700" />
      </g>
      <Dia x={762} label="ø40" top={427} bottom={480} />
      <Dia x={860} label="ø52" top={419} bottom={488} tol={false} />
      <Dia x={981} label="ø43" top={423} bottom={484} />
      <Dia x={1040} label="ø40" top={427} bottom={480} />
      <Dia x={1100} label="ø33" top={431} bottom={476} />
      <Dia x={1177} label="ø28" top={434} bottom={472} />
      <Datum x={762} y={491} top={482} label="A" />
      <Datum x={1040} y={491} top={482} label="B" />
      <Datum x={981} y={494} top={485} />
      <Datum x={1177} y={483} top={474} label="D" />

      <L d="M770 405H762V426M953 390H945.500M945.500 385V417M990 402.500H981V423M1062.500 405H1055V426M1185 413.500H1177V434" />
      <Frame x={770.500} y={399.500} sym="cyl" cells={[[24, "0.004"]]} />
      <Frame x={953.500} y={384.500} sym="run" cells={[[22, "0.015"], [18, "A-B"]]} />
      <Frame x={989.500} y={396.500} sym="run" cells={[[22, "0.012"], [18, "A-B"]]} />
      <Frame x={1062.500} y={399.500} sym="cyl" cells={[[24, "0.004"]]} />
      <Frame x={1184.500} y={407.500} sym="cyl" cells={[[24, "0.004"]]} />

      <Finish x={753} y={425} label="Ra0.8" />
      <Finish x={1009} y={422} label="Ra1.6" />
      <Finish x={1040} y={425} label="Ra0.8" />
      <Finish x={1100} y={430} label="Ra1.6" />
      <Finish x={1210} y={433} label="Ra1.6" />
      <Finish x={945} y={417} label="Ra3.2" rot={-90} />
      <Finish x={774} y={419} label="Ra1.6" rot={-90} />

      <Dim x1={750} x2={775} y={517.500} from={482} label="18" />
      <Dim x1={945.500} x2={1016.500} y={517.500} from={484} label="51.5" />
      <Dim x1={1135.500} x2={1218.500} y={517.500} from={474} label="60" />
      <Dim x1={750} x2={945.500} y={539.500} from={490} label="142" />
      <Dim x1={945.500} x2={1064} y={539.500} from={482} label="86" />
      <Dim x1={750} x2={1218.500} y={554} from={482} label="340" />
      <Dim x1={952.500} x2={1007.500} y={503.500} from={455} label="40" />
      <Dim x1={1142.500} x2={1211.500} y={503.500} from={453} label="50" />
      <L d="M939 503.500H952M1129 503.500H1142" />
      <Tx x={949} y={499}>5</Tx>
      <Tx x={1139} y={499}>5</Tx>

      {([[965, 411, "B", 1], [965, 498, "B", -1], [1149, 422, "A", 1], [1149, 487, "A", -1]] as [number, number, string, number][]).map(([x, y, t, dir]) => (
        <g key={`${x}${y}`}>
          <Tx x={x - 1} y={y} s={8}>{t}</Tx>
          <L d={`M${x + 5} ${y + dir * 4}V${y - dir}H${x + 10}`} />
          <path d={`M${x + 8} ${y - dir - 2}l8 2-8 2Z`} fill="#12e8f0" />
        </g>
      ))}

      <Section cx={774.700} r={19.500} name="A-A" notch={789.500} half={5.200} width="8-0.036" depth="24-0.1" frameX={816.500} frameY={621} datum="D" tol="0.006" hatch={[-18, 0, 18]} />
      <Section cx={1016.300} r={30.200} name="B-B" notch={1040} half={8.300} width="12-0.043" depth="39-0.2" frameX={1068.500} frameY={618.500} datum="C" tol="0.008" hatch={[-37, -19, 0, 17, 36]} />

      <path d="M1344 302L1341 297H1347ZM1344 302L1349 293H1367" stroke="#e6e6e6" />
      <Tx x={1349} y={297} s={7} anchor="start" fill="#c4c4c4">Ra12.5</Tx>
      <path d="M1376 303l2 3 3-6M1370 299q-3 4 0 8M1381.500 299" stroke="#e6e6e6" />
      <path d="M1382 299q2 4 0 8" stroke="#e6e6e6" />

      <Tx x={1251} y={624.500} s={15}>技术要求</Tx>
      <Tx x={1146} y={651} s={10} anchor="start">1、热处理45，正火处理，硬度为162～217HBS；</Tx>
      <Tx x={1146} y={664} s={10} anchor="start">2、未注圆角半径为R1.5；</Tx>
      <Tx x={1146} y={676} s={10} anchor="start">3、未注倒角为C1.5；</Tx>
      <Tx x={1146} y={691} s={10} anchor="start">4、未注尺寸公差按GB/T1804-m。</Tx>
    </svg>
  );
}

function ViewCube() {
  return (
    <svg width="154" height="160" viewBox="1750 264 154 160" fill="none" role="img" aria-label="视图方向" className="font-['Noto_Sans_CJK_SC',sans-serif]">
      <path d="M1753 277L1761 269L1769 277H1767V283H1763V278H1759V283H1755V277Z" fill="#5a5e66" />
      <circle cx="1827" cy="344" r="55.500" stroke="#50545c" strokeWidth="13" />
      <path d="M1872 270q11-1 18 7" stroke="#5a5e66" strokeWidth="5" /><path d="M1867 271L1875 265V278Z" fill="#5a5e66" />
      <path d="M1896 282q6 8 5 18" stroke="#5a5e66" strokeWidth="5" /><path d="M1894 298H1907L1901 306Z" fill="#5a5e66" />
      <rect x="1800.500" y="318" width="53" height="53" fill="#dcdcdc" stroke="#8a8f88" />
      <rect x="1810" y="328" width="34" height="33" fill="#bbc4cf" />
      <g fill="#e8e8e8"><path d="M1820 304H1834L1827 311Z" /><path d="M1820 385H1834L1827 378Z" /><path d="M1786 337V351L1793 344Z" /><path d="M1868 337V351L1861 344Z" /></g>
      <path d="M1889 406H1901M1890 409H1900L1895 414Z" stroke="#6a6e76" strokeWidth="1.500" fill="#6a6e76" />
      <g fill="#dad8d0" fontSize="18" textAnchor="middle" dominantBaseline="central">
        <text x="1827" y="286">北</text><text x="1768" y="344">西</text><text x="1885" y="344">东</text><text x="1827" y="403">南</text>
        <text x="1827" y="342" fontSize="32" fontWeight="300" fill="#4d5866">上</text>
      </g>
    </svg>
  );
}

function NavBar() {
  const s = { stroke: "#43484f", strokeWidth: 1.600 };
  return (
    <div className="mt-[31px] mr-[5px] flex w-10 flex-col items-center self-end rounded-sm bg-[#5b6064] shadow-[0_0_3px_#111]">
      <button className="self-end p-[2px]" aria-label="关闭导航栏"><Svg w={9} h={9}><circle cx="4.500" cy="4.500" r="4.500" fill="#484d53" /><path d="M3 3l3 3M6 3l-3 3" stroke="#666b70" /></Svg></button>
      <button className="mt-2 flex flex-col items-center" aria-label="控制盘">
        <Svg w={30} h={30}><path d="M15 1.500H28.500V15A13.500 13.500 0 1 1 15 1.500Z" {...s} /><circle cx="15" cy="14" r="7" {...s} /><path d="M10 20L6 25M20 20L24 25" {...s} /></Svg>
        <Svg w={7} h={4} className="mt-[8px]"><path d="M0 0H7L3.500 4Z" fill="#3b4046" /></Svg>
      </button>
      <span className="mt-[6px] h-px w-9 bg-[#6c7074]" />
      <button className="mt-1" aria-label="平移">
        <Svg w={30} h={32}><path d="M10 30C7 25 3 21 1.500 17C2 14.500 5 15 7.500 19L6 7C6 4 9 4 9.500 7L11.500 14L12 4C12.500 1 15.500 1 16 4L17 14L20 5C21 2.500 24 3 23 6L21.500 16L26 11C28 9 30 11 28 13.500C26 18 25 25 22 30Z" {...s} /></Svg>
      </button>
      <button className="mt-[3px] flex flex-col items-center" aria-label="缩放">
        <Svg w={32} h={30}><path d="M3 3L19 19M19 3L3 19" {...s} /><path d="M1 1h6l-6 6ZM21 1h-6l6 6ZM1 21h6l-6-6Z" fill="#43484f" /><circle cx="21" cy="19" r="6" fill="#5b6064" {...s} /><path d="M25.500 23.500L31 29" stroke="#43484f" strokeWidth="3.500" /></Svg>
        <Svg w={7} h={4} className="mt-[7px]"><path d="M0 0H7L3.500 4Z" fill="#3b4046" /></Svg>
      </button>
      <button className="mt-1 flex flex-col items-center" aria-label="动态观察">
        <Svg w={30} h={30}><path d="M12 29V7H9.500L15 1L20.500 7H18V29Z" {...s} /><path d="M10 11C-2 13-2 20 8 21H15M20 11C32 13 32 20 22 21" {...s} /><path d="M4 21l6-4v8Z" fill="#43484f" /></Svg>
        <Svg w={7} h={4} className="mt-[8px]"><path d="M0 0H7L3.500 4Z" fill="#3b4046" /></Svg>
      </button>
      <span className="mt-[6px] h-px w-9 bg-[#6c7074]" />
      <button className="mt-[3px]" aria-label="ShowMotion">
        <Svg w={30} h={32}><path d="M1 2H8V10H1ZM11 2H18V10H11ZM21 2H28V10H21ZM1 14H21V30H1Z" {...s} /><path d="M7 17.500L16 22L7 26.500Z" fill="#43484f" /></Svg>
      </button>
      <button className="mt-[8px] self-end p-[2px]" aria-label="导航栏菜单"><Svg w={9} h={9}><circle cx="4.500" cy="4.500" r="4" stroke="#484d53" strokeWidth="1.500" /><path d="M2 4.500h5" stroke="#484d53" /></Svg></button>
    </div>
  );
}

function Canvas() {
  return (
    <main className="relative flex flex-1 items-start justify-center pt-[28px]">
      <Drawing />
      <div className="absolute top-[5px] left-[5px] flex gap-px text-[15px] leading-5 text-[#e4e4e4]"><span>[−]</span><span>[俯视]</span><span>[二维线框]</span></div>
      <div className="absolute top-[11px] right-0 flex w-[165px] flex-col">
        <div className="mr-[14px] flex items-center gap-3 self-end">
          <button aria-label="最小化视口"><Svg w={13} h={13}><path d="M0 10.500H13" stroke="#fff" strokeWidth="4" /></Svg></button>
          <button aria-label="还原视口"><Svg w={13} h={13}><path d="M3 1H12V9" stroke="#fff" strokeWidth="1.500" /><rect x="1.500" y="4.500" width="7" height="7" stroke="#fff" strokeWidth="2.500" /></Svg></button>
          <button aria-label="关闭视口"><Svg w={13} h={13}><path d="M2 1L11 12M11 1L2 12" stroke="#fff" strokeWidth="3" /></Svg></button>
        </div>
        <div className="mt-[9px]"><ViewCube /></div>
        <button className="mt-[11px] ml-[48px] flex h-[21px] w-14 items-center justify-between rounded-md border border-[#9a9ca8] bg-[#c2c4d2] px-1 font-['Liberation_Sans',sans-serif] text-[13px] text-[#5c5e66]">
          WCS
          <Svg w={11} h={6}><path d="M0 0H11L5.500 6Z" fill="#e2e3ea" stroke="#9a9ca8" /></Svg>
        </button>
        <NavBar />
      </div>
      <div className="absolute bottom-0 left-[411px] flex h-8 w-[1089px] items-stretch">
        <div className="flex w-[72px] items-center bg-[#2a3040] pl-1">
          <Svg w={8} h={22}>{[1, 5, 9, 13, 17, 21].map((y) => <path key={y} d={`M1 ${y}H3M5 ${y}H7`} stroke={G} strokeWidth="1.500" />)}</Svg>
          <button className="ml-[7px]" aria-label="关闭命令行"><Svg w={12} h={12}><path d="M1 1L11 11M11 1L1 11" stroke="#c9cbd0" strokeWidth="2" /></Svg></button>
          <button className="ml-[15px]" aria-label="自定义"><Svg w={20} h={20}><path d="M2 18L12 8" stroke="#c9cbd0" strokeWidth="3.500" /><path d="M19 5L15 8L12 5L15 1C11 0 9 3 10 7L13 10C17 11 20 9 19 5Z" fill="#c9cbd0" /></Svg></button>
        </div>
        <div className="flex flex-1 items-center rounded-r-sm bg-[#bbbcbe] px-[5px]">
          <Svg w={20} h={16}><rect x="0.700" y="0.700" width="18.600" height="14.600" stroke="#55585c" strokeWidth="1.400" /><path d="M1 3H19" stroke="#55585c" strokeWidth="2" /><path d="M3 7L6 9.500L3 12M7 12H11" stroke="#55585c" /></Svg>
          <Svg w={9} h={6} className="ml-[3px]"><path d="M0 0H9L4.500 6Z" fill="#44474b" /></Svg>
          <input aria-label="命令行" placeholder="键入命令" className="ml-[9px] min-w-0 flex-1 bg-transparent text-base italic outline-none placeholder:text-[#6a6c70]" />
          <Svg w={9} h={5} className="mr-[1px]"><path d="M0 5H9L4.500 0Z" fill="#55585c" /></Svg>
        </div>
      </div>
    </main>
  );
}

/* ---------- status bar ---------- */

function Cell({ w, on = false, children, label }: { w: string; on?: boolean; children: ReactNode; label: string }) {
  return (
    <button aria-label={label} className={`${w} ${on ? "bg-[#6190c4]" : ""} flex h-7 items-center justify-center`}>
      {children}
    </button>
  );
}
function Group({ children }: { children: ReactNode }) {
  return <div className="flex h-[30px] items-center bg-[#3b4453]">{children}</div>;
}
const person = <path d="M10 1L12 5V9L19 17L18 19L12 15L11 18H9L8 15L2 19L1 17L8 9V5Z" fill="#f0f0f0" />;

function StatusBar() {
  return (
    <footer className="mx-[3px] flex h-[45px] items-start border-t-[5px] border-[#3b4453] pl-[19px] text-[15px] leading-5 text-[#f2f2f2]">
      <button className="flex h-[32px] items-center" aria-label="菜单"><Menu /></button>
      <button className="ml-[11px] h-[31px] bg-[#3b4453] px-[21px] font-bold [clip-path:polygon(12px_0,100%_0,calc(100%_-_12px)_100%,0_100%)]">模型</button>
      <button className="ml-[10px] h-[31px]">布局1</button>
      <span className="ml-3 flex h-[31px] items-center"><Slash /></span>
      <button className="ml-[10px] h-[31px]">布局2</button>
      <span className="ml-3 flex h-[31px] items-center"><Slash /></span>
      <button className="ml-[11px] flex h-[31px] items-center" aria-label="新建布局"><Plus /></button>
      <span className="ml-[11px] flex h-[31px] items-center"><Slash /></span>
      <div className="ml-auto flex gap-[3px] pt-[2px] pr-px">
        <Group><Cell w="w-[34px] pl-[2px]" label="模型空间">模型</Cell></Group>
        <Group>
          <Cell w="w-[30px]" label="栅格"><Svg><path d="M5 0V20M10 0V20M15 0V20M0 5H20M0 10H20M0 15H20" stroke={G} strokeWidth="1.200" /></Svg></Cell>
          <Cell w="w-[30px]" label="捕捉"><Svg>{[3, 9, 15].map((y) => <path key={y} d={`M2 ${y}H18`} stroke={G} strokeWidth="3" strokeDasharray="3 3.500" />)}</Svg></Cell>
          <Cell w="w-[20px]" label="捕捉选项"><Caret size={9} /></Cell>
        </Group>
        <Group>
          <Cell w="w-[30px]" label="正交"><Svg><path d="M1 0V19H20M1 12H7V19" stroke={G} strokeWidth="1.200" /></Svg></Cell>
          <Cell w="w-[29px]" on label="极轴"><Svg><circle cx="9" cy="10" r="8" stroke="#fff" strokeWidth="1.200" /><path d="M9 10H20M9 10L16 2" stroke="#fff" /><path d="M11 7l4 3" stroke="#fff" /></Svg></Cell>
          <Cell w="w-[22px]" label="极轴选项"><Caret size={9} /></Cell>
          <Cell w="w-[28px]" label="等轴测"><Svg><path d="M10 0V20" stroke="#3fbf6f" /><path d="M2 2L17 18" stroke="#e05555" /><rect x="8.500" y="8.500" width="3" height="3" stroke={G} /></Svg></Cell>
          <Cell w="w-[21px]" label="等轴测选项"><Caret size={9} /></Cell>
        </Group>
        <Group>
          <Cell w="w-[28px] mr-px" on label="对象捕捉追踪"><Svg><path d="M2 18L18 1M2 18H20" stroke="#fff" strokeWidth="1.200" /><circle cx="10" cy="10" r="2" fill="#fff" /></Svg></Cell>
          <Cell w="w-[28px]" on label="对象捕捉"><Svg><rect x="2" y="2" width="17" height="17" stroke="#fff" strokeWidth="1.200" /><rect x="0.500" y="0.500" width="4" height="4" fill="#6190c4" stroke="#fff" /></Svg></Cell>
          <Cell w="w-[21px]" label="捕捉设置"><Caret size={9} /></Cell>
        </Group>
        <Group>
          <Cell w="w-[29px]" on label="注释可见性"><Svg>{person}<circle cx="16.500" cy="4" r="3" stroke="#fff" /></Svg></Cell>
          <Cell w="w-[30px]" label="自动缩放"><Svg>{person}<path d="M17 0l-3 5h2l-2 4 5-5h-2l2-4Z" fill="#f0f0f0" /></Svg></Cell>
          <Cell w="w-[30px]" label="注释比例"><Svg>{person}</Svg></Cell>
          <Cell w="w-[42px]" label="比例"><span className="mr-1">1:1</span><Caret size={9} /></Cell>
        </Group>
        <Group>
          <Cell w="w-[29px]" label="工作空间"><Svg><circle cx="10" cy="10" r="5.500" stroke={G} strokeWidth="4" />{[0, 45, 90, 135, 180, 225, 270, 315].map((a) => <path key={a} d="M10 0V4" stroke={G} strokeWidth="4" transform={`rotate(${a} 10 10)`} />)}</Svg></Cell>
          <Cell w="w-[20px]" label="工作空间选项"><Caret size={9} /></Cell>
        </Group>
        <Group><Cell w="w-[28px]" label="监视器"><Plus /></Cell></Group>
        <Group><Cell w="w-[31px]" label="隔离对象"><Svg><rect x="1" y="1" width="7" height="7" stroke={G} /><circle cx="15" cy="9" r="4" stroke={G} /><path d="M8 12L12 19H4Z" stroke={G} /></Svg></Cell></Group>
        <Group><Cell w="w-[34px]" label="硬件加速"><Svg w={24} h={24}><path d="M0 0H14L20 4V18H0Z" fill="#2f62a8" /><path d="M7 2V14M1 8H13" stroke="#dfe8f5" strokeWidth="1.500" /><path d="M5 6h4v4h-4Z" fill="#2f62a8" stroke="#dfe8f5" /><path d="M0 14H4L5 15H10V22H0Z" fill="#f5b324" /><path d="M9 16L14 22L23 11" stroke="#3cb34a" strokeWidth="3.500" /></Svg></Cell></Group>
        <Group><Cell w="w-[30px]" label="全屏"><Svg><rect x="0.700" y="3" width="18.600" height="14" stroke={G} strokeWidth="1.300" /><path d="M11 9L16 5M8 11L4 15" stroke={G} /><path d="M17 4v4l-4-4ZM3 16v-4l4 4Z" fill={G} /></Svg></Cell></Group>
        <Group><Cell w="w-[30px]" label="自定义"><Menu /></Cell></Group>
      </div>
    </footer>
  );
}

/* ---------- taskbar ---------- */

function TaskIcon({ label, dot = false, children }: { label: string; dot?: boolean; children: ReactNode }) {
  return (
    <button aria-label={label} className="flex w-[55px] flex-col items-center pt-[15px]">
      {children}
      {dot && <span className="mt-[5px] h-1 w-2 rounded-full bg-[#808080]" />}
    </button>
  );
}

function Taskbar() {
  return (
    <div className="flex h-[60px] items-start bg-[linear-gradient(90deg,#dcdcdc_0%,#dcdbda_35%,#d3e0ea_40%,#d5e3ec_45%,#e0deda_58%,#dddcda_70%,#d5e4ee_76%,#d5e3ee_83%,#e0dfdc_90%,#e9dec8_100%)] text-[#1d1d1d]">
      <button className="flex flex-1 items-start pt-[9px] pl-6 text-left">
        <span className="relative">
          <Svg w={34} h={38} className="mt-[2px]">
            <path d="M8 26a7 7 0 0 1-1-13a9 9 0 0 1 17-2a8 8 0 0 1 1 15Z" fill="#a9c6f5" /><circle cx="10" cy="20" r="8" fill="#c9dbf9" />
            <path d="M12 22c3 4 4 6 4 8a4 4 0 0 1-8 0c0-2 1-5 4-8ZM24 22c3 4 4 6 4 8a4 4 0 0 1-8 0c0-2 1-5 4-8Z" fill="#1f74e8" />
          </Svg>
          <span className="absolute -top-px left-[14px] h-5 w-5 rounded-full bg-[#c42b1c] text-center text-[13px] leading-5 text-white">7</span>
        </span>
        <span className="ml-[6px] pt-px text-[15px] leading-[19px]">28°C<br /><span className="text-[#555]">雨</span></span>
      </button>
      <div className="flex w-[770px] items-start">
        <button aria-label="开始" className="ml-[10px] pt-4"><Svg w={30} h={30}><path d="M0 1.500Q0 0 1.500 0H14V14H0ZM15.500 0H28.500Q30 0 30 1.500V14H15.500Z" fill="#2bb3ec" /><path d="M0 15.500H14V30H1.500Q0 30 0 28.500ZM15.500 15.500H30V28.500Q30 30 28.500 30H15.500Z" fill="#087bd3" /></Svg></button>
        <label className="mt-[10px] ml-4 flex h-[39px] w-[274px] items-center rounded-full border border-[#cfcfcf] bg-[#f6f7f8] pr-5 pl-[14px]">
          <Svg w={20} h={20}><circle cx="8.500" cy="8.500" r="7" stroke="#222" strokeWidth="2" /><path d="M13 13.500L18 19" stroke="#222" strokeWidth="2.400" /></Svg>
          <input aria-label="搜索" placeholder="搜索" className="ml-[11px] w-20 min-w-0 flex-1 bg-transparent text-[18px] outline-none placeholder:text-[#5d5d5d]" />
          <Svg w={28} h={34}>
            <path d="M3 1L9 8Q14 6 19 8L25 1L23 13Q26 18 23 24Q26 28 25 34H5Q3 28 5 24Q2 18 5 13Z" fill="#b4733a" />
            <path d="M2 0L8 9L5 12ZM26 0L20 9L23 12Z" fill="#5a3a22" /><path d="M5 5L8 10L6 11ZM23 5L20 10L22 11Z" fill="#d9a878" />
            <path d="M6 17L10 20L12 26L9 30L6 25ZM22 17L18 20L16 26L19 30L22 25Z" fill="#e8cfae" /><path d="M11 19H17L18 25L14 28L10 25Z" fill="#f5e8d6" />
            <path d="M11 9L12 14M14 8V14M17 9L16 14" stroke="#6b3d1a" /><circle cx="10" cy="17" r="1.300" fill="#222" /><circle cx="18" cy="17" r="1.300" fill="#222" />
            <path d="M12.500 21H15.500L14 23Z" fill="#33201a" /><path d="M9 30l2 3M19 30l-2 3M14 29v4" stroke="#6b3d1a" />
          </Svg>
        </label>
        <div className="ml-[3px] flex">
          <TaskIcon label="任务视图"><Svg w={30} h={30}><rect x="0" y="8" width="22" height="20" rx="2" fill="#2b2b2b" /><rect x="8" y="1" width="21" height="19" rx="2" fill="#f4f4f4" fillOpacity="0.850" /></Svg></TaskIcon>
          <TaskIcon label="文件资源管理器" dot><Svg w={30} h={30}><path d="M0 3Q0 2 2 2H10L13 5H28Q30 5 30 7V27H0Z" fill="#e8a31a" /><path d="M0 8H28Q30 8 30 10V26Q30 28 28 28H2Q0 28 0 26Z" fill="#fcd056" /><path d="M5 28V23Q5 20 8 20H22Q25 20 25 23V28Z" fill="#1a73c9" /><path d="M10 24H20" stroke="#0c4f94" strokeWidth="2" /></Svg></TaskIcon>
          <TaskIcon label="Edge" dot><Svg w={30} h={30}><circle cx="15" cy="15" r="15" fill="#1b8ad8" /><path d="M3 6A15 15 0 0 1 30 15C30 20 26 22 22 22C18 22 17 20 18 18C20 14 16 9 11 9C7 9 3 12 1 16C0 12 1 9 3 6Z" fill="#3ccf9b" /><path d="M3 6A15 15 0 0 1 20 1C12 3 8 6 1 16C0 12 1 9 3 6Z" fill="#2aa5dd" /><path d="M1 16C3 11 7 9 11 9C16 9 20 14 18 18C17 20 18 22 22 22H17C12 22 10 18 11 14C6 17 6 26 13 29.800A15 15 0 0 1 1 16Z" fill="#1565b8" /><path d="M11 15C9 20 14 25 20 24.500C24 24.500 26 23 27.500 22C25 27 20 30 15 30C7 28 7 19 11 15Z" fill="#0d4a94" /><path d="M18 18C17 20 18 22 22 22C26 22 28 21 29 19L27.500 22C24 25 12 26 11 15C13 12 18 14 18 18Z" fill="#e8eef2" /></Svg></TaskIcon>
          <TaskIcon label="Microsoft Store"><Svg w={30} h={30}><path d="M9 6V3Q9 1 11 1H19Q21 1 21 3V6" stroke="#2aa3e8" strokeWidth="2" /><rect x="1" y="5" width="28" height="24" rx="3" fill="#174a86" /><rect x="9" y="11" width="5.500" height="5.500" fill="#f25022" /><rect x="15.500" y="11" width="5.500" height="5.500" fill="#7fba00" /><rect x="9" y="17.500" width="5.500" height="5.500" fill="#00a4ef" /><rect x="15.500" y="17.500" width="5.500" height="5.500" fill="#ffb900" /></Svg></TaskIcon>
          <TaskIcon label="Dell"><span className="flex h-[30px] w-[30px] items-center justify-center rounded-full border-2 border-[#222] bg-[#ececec] text-[10px] leading-none font-extrabold">DELL</span></TaskIcon>
          <TaskIcon label="WPS"><Svg w={30} h={30}><path d="M0 6H8L11 18L14 10H17L20 18L24 6H30L23 25H18L15.500 17L13 25H8Z" fill="#f23a1d" /><path d="M13 6H24L22 11H15Z" fill="#ff6a3c" /></Svg></TaskIcon>
          <TaskIcon label="微信" dot><Svg w={30} h={30}><path d="M12 2C5 2 0 6.500 0 12C0 15 2 18 5 20L4 25L9 22C18 23 24 18 24 12C24 6.500 19 2 12 2Z" fill="#1fc862" /><circle cx="8" cy="9" r="1.600" fill="#0c5a2c" /><circle cx="16" cy="9" r="1.600" fill="#0c5a2c" /><path d="M21 13C16 13 12 16 12 20C12 24 17 27 22 26L26 28L25.500 25C28.500 23.500 30 22 30 20C30 16 26 13 21 13Z" fill="#f2f2f2" /><circle cx="18" cy="18" r="1.300" fill="#777" /><circle cx="24" cy="18" r="1.300" fill="#777" /></Svg></TaskIcon>
          <button aria-label="AutoCAD 2024" className="mt-[6px] ml-1 flex h-12 w-12 flex-col items-center rounded-md bg-[#f4f5f6] pt-[9px]">
            <Svg w={28} h={30}><path d="M0 1L4 0V28L0 30Z" fill="#c40a44" /><path d="M4 0H26V20H4Z" fill="#e51050" /><path d="M4 20H26L28 4V30H4Z" fill="#8b0a2d" /><path d="M13.500 3H17.500L21.500 15.500H18.400L17.700 13H13.300L12.600 15.500H9.500ZM14 10.500H17L15.500 5.500Z" fill="#fff" /><text x="15" y="27.500" fontSize="7" fontWeight="bold" textAnchor="middle" fill="#fff">CAD</text></Svg>
            <span className="mt-[4px] h-1 w-[19px] rounded-full bg-[#0b74d1]" />
          </button>
        </div>
      </div>
      <div className="flex flex-1 items-center justify-end pt-[9px] pr-6">
        <button aria-label="显示隐藏的图标"><Svg w={14} h={9}><path d="M1 8L7 1.500L13 8" stroke="#222" strokeWidth="1.600" /></Svg></button>
        <Svg w={22} h={20} className="ml-[22px]"><path d="M6 15.500a4.500 4.500 0 0 1 0-9a6 6 0 0 1 10.500 1a4 4 0 0 1 .5 8Z" stroke="#222" strokeWidth="1.500" fill="#b9bcbf" /><path d="M2 2L20 19" stroke="#222" strokeWidth="1.500" /></Svg>
        <button className="ml-5 text-[18px] leading-6">中</button>
        <button className="ml-[30px] text-[18px] leading-6">拼</button>
        <Svg w={22} h={22} className="ml-[27px]"><path d="M14 2H2V16H20V11M8 16V20M14 16V20M6 20H16" stroke="#222" strokeWidth="1.400" /><rect x="15.500" y="1" width="5" height="6" stroke="#222" strokeWidth="1.400" /><path d="M18 7V12" stroke="#222" strokeWidth="1.400" /></Svg>
        <Svg w={20} h={20} className="ml-2"><path d="M1 7H4L9 3V17L4 13H1Z" stroke="#222" strokeWidth="1.400" /><path d="M12 7q2 3 0 6" stroke="#222" strokeWidth="1.400" /><path d="M15 5q4 5 0 10M17.500 3q5 7 0 14" stroke="#a5a5a5" strokeWidth="1.300" /></Svg>
        <Svg w={20} h={20} className="ml-[11px]"><rect x="1.500" y="6.500" width="15" height="10" rx="2" stroke="#222" strokeWidth="1.500" /><rect x="4" y="9" width="10" height="5" fill="#222" /><path d="M18.500 9.500V13.500" stroke="#222" strokeWidth="2" /><path d="M5 0L0 7H3L1 12L7 5H4Z" fill="#222" /></Svg>
        <time className="ml-[18px] text-right text-[15px] leading-5 whitespace-nowrap">22:40<br />2025/6/11</time>
      </div>
    </div>
  );
}

export default function App() {
  return (
    <div className="flex min-h-screen flex-col bg-[linear-gradient(90deg,#050608_50%,#33302e)] font-['Noto_Sans','Noto_Sans_CJK_SC',sans-serif] select-none">
      <div className="mx-[3px] flex flex-1 flex-col rounded-xl border-2 border-t border-x-[#1486c4] border-t-[#0a8fd8] border-b-[#1486c4] bg-[#222933]">
        <TitleBar />
        <div className="h-[6px]" />
        <RibbonTabs />
        <Ribbon />
        <div className="h-[3px]" />
        <FileTabs />
        <Canvas />
        <StatusBar />
      </div>
      <Taskbar />
    </div>
  );
}
